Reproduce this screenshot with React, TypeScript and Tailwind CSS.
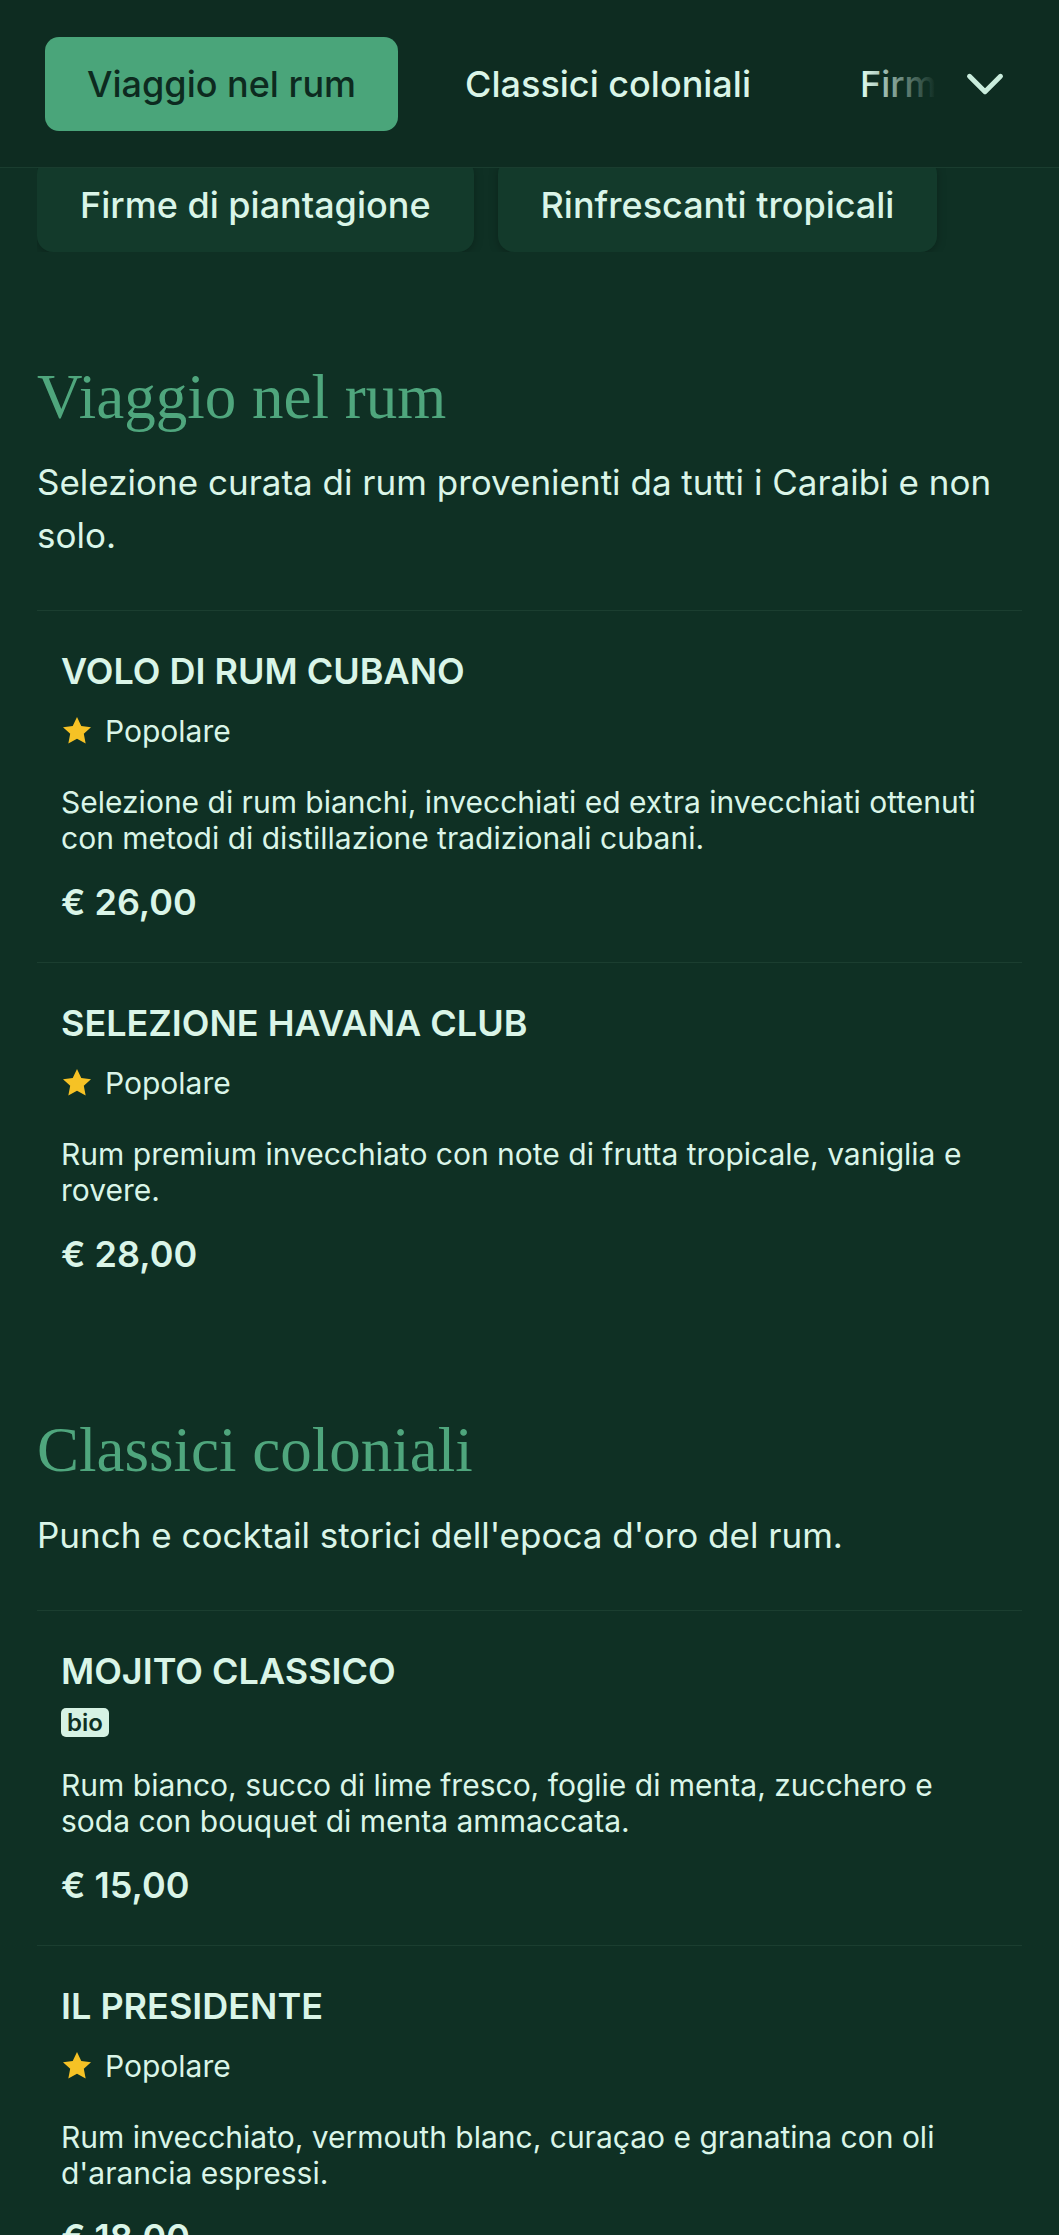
import { ChevronDown } from 'lucide-react';

type Item = {
  name: string;
  tag: 'popular' | 'bio';
  description: string;
  price: string;
};

type Section = {
  title: string;
  subtitle: string;
  items: Item[];
};

const sections: Section[] = [
  {
    title: 'Viaggio nel rum',
    subtitle: 'Selezione curata di rum provenienti da tutti i Caraibi e non solo.',
    items: [
      {
        name: 'Volo di rum cubano',
        tag: 'popular',
        description:
          'Selezione di rum bianchi, invecchiati ed extra invecchiati ottenuti con metodi di distillazione tradizionali cubani.',
        price: '€ 26,00',
      },
      {
        name: 'Selezione Havana Club',
        tag: 'popular',
        description: 'Rum premium invecchiato con note di frutta tropicale, vaniglia e rovere.',
        price: '€ 28,00',
      },
    ],
  },
  {
    title: 'Classici coloniali',
    subtitle: "Punch e cocktail storici dell'epoca d'oro del rum.",
    items: [
      {
        name: 'Mojito classico',
        tag: 'bio',
        description:
          'Rum bianco, succo di lime fresco, foglie di menta, zucchero e soda con bouquet di menta ammaccata.',
        price: '€ 15,00',
      },
      {
        name: 'Il Presidente',
        tag: 'popular',
        description: "Rum invecchiato, vermouth blanc, curaçao e granatina con oli d'arancia espressi.",
        price: '€ 18,00',
      },
    ],
  },
];

const Star = () => (
  <svg viewBox="0 0 24 24" className="h-[32px] w-[32px]" fill="#f6c225">
    <path d="M12 1.5l3.2 6.7 7.3.9-5.4 5 1.4 7.3L12 17.8l-6.5 3.6 1.4-7.3-5.4-5 7.3-.9z" />
  </svg>
);

const MenuItem = ({ item, last }: { item: Item; last: boolean }) => (
  <div className={`border-t border-[#1b3e30] px-[24px] pt-[38px] ${last ? 'pb-[39px]' : 'pb-[38px]'}`}>
    <h3 className="text-[36px] font-semibold uppercase leading-[44px] text-[#daf5e8]">{item.name}</h3>
    {item.tag === 'popular' ? (
      <div className="mt-[15px] flex h-[46px] items-center gap-[12px]">
        <Star />
        <span className="text-[30px] text-[#daf5e8]">Popolare</span>
      </div>
    ) : (
      <div className="mt-[15px] flex">
        <span className="flex h-[29px] items-center rounded-[5px] bg-[#d6f2e4] px-[6px] text-[24px] font-semibold text-[#0f3024]">
          bio
        </span>
      </div>
    )}
    <p className="mt-[30px] text-[30px] leading-[36px] text-[#daf5e8]">{item.description}</p>
    <p className="mt-[24px] text-[36px] font-semibold leading-[44px] text-[#daf5e8]">{item.price}</p>
  </div>
);

export default function App() {
  return (
    <div className="min-h-screen bg-[#0f3024] font-['Inter',sans-serif]">
      <header className="flex h-[168px] items-center border-b border-[#1a3d2f] bg-[#0e2c21] pl-[45px] pr-[37px]">
        <div className="relative flex-1 overflow-hidden">
          <div className="flex gap-[25px] whitespace-nowrap">
            <button className="flex h-[94px] shrink-0 items-center rounded-[14px] bg-[#4aa57a] px-[42px] text-[36px] font-medium text-[#0d2a1f]">
              Viaggio nel rum
            </button>
            <button className="flex h-[94px] shrink-0 items-center rounded-[14px] px-[42px] text-[36px] font-medium text-[#daf5e8]">
              Classici coloniali
            </button>
            <button className="flex h-[94px] shrink-0 items-center rounded-[14px] px-[42px] text-[36px] font-medium text-[#daf5e8]">
              Firme di piantagione
            </button>
          </div>
          <div className="pointer-events-none absolute inset-y-0 right-0 w-[80px] bg-gradient-to-l from-[#0e2c21] from-10% to-transparent" />
        </div>
        <button className="ml-[4px] flex h-[70px] w-[74px] items-center justify-center text-[#c9ecdc]">
          <ChevronDown className="h-[62px] w-[62px]" strokeWidth={1.9} />
        </button>
      </header>

      <main className="px-[37px]">
        <div className="mb-[10px] flex h-[84px] items-end gap-[24px] overflow-hidden">
          {['Firme di piantagione', 'Rinfrescanti tropicali'].map((label) => (
            <button
              key={label}
              className="flex h-[94px] shrink-0 items-center rounded-[16px] bg-[#133a2b] px-[43px] text-[36px] font-medium text-[#daf5e8] shadow-[0_2px_10px_rgba(0,0,0,0.25)]"
            >
              {label}
            </button>
          ))}
        </div>

        {sections.map((section) => (
          <section key={section.title} className="pt-[98px]">
            <h2 className="font-['Liberation_Serif',serif] text-[63px] leading-[74px] text-[#4fa67d]">
              {section.title}
            </h2>
            <p className="mt-[22px] text-[35px] leading-[53px] text-[#daf5e8]">{section.subtitle}</p>
            <div className="mt-[48px]">
              {section.items.map((item, i) => (
                <MenuItem key={item.name} item={item} last={i === section.items.length - 1} />
              ))}
            </div>
          </section>
        ))}
      </main>
    </div>
  );
}
